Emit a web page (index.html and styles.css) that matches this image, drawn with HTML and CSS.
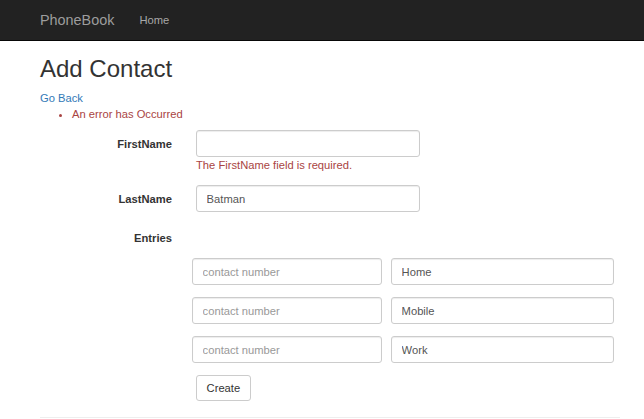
FILE: index.html
```html
<!DOCTYPE html>
<html>
<head>
<meta charset="utf-8">
<title>Add Contact</title>
<link rel="stylesheet" href="styles.css">
</head>
<body>
<nav class="navbar">
  <a class="brand" href="#">PhoneBook</a>
  <a class="nav-link" href="#">Home</a>
</nav>
<main class="container">
  <h2 class="title">Add Contact</h2>
  <a class="back" href="#">Go Back</a>
  <ul class="summary">
    <li>An error has Occurred</li>
  </ul>
  <form class="form">
    <div class="group">
      <label class="label">FirstName</label>
      <div class="field">
        <input class="input name" type="text" value="">
        <div class="error">The FirstName field is required.</div>
      </div>
    </div>
    <div class="group">
      <label class="label">LastName</label>
      <div class="field">
        <input class="input name" type="text" value="Batman">
      </div>
    </div>
    <div class="group">
      <label class="label">Entries</label>
    </div>
    <div class="entries">
      <div class="entry">
        <input class="input number" type="text" placeholder="contact number">
        <input class="input kind" type="text" value="Home">
      </div>
      <div class="entry">
        <input class="input number" type="text" placeholder="contact number">
        <input class="input kind" type="text" value="Mobile">
      </div>
      <div class="entry">
        <input class="input number" type="text" placeholder="contact number">
        <input class="input kind" type="text" value="Work">
      </div>
    </div>
    <div class="actions">
      <button class="btn" type="button">Create</button>
    </div>
  </form>
  <hr class="rule">
</main>
</body>
</html>
```
FILE: styles.css
```css
* { box-sizing: border-box; }
html, body {
  margin: 0;
  padding: 0;
  background: #fff;
}
body {
  font-family: "Liberation Sans", Arial, sans-serif;
  font-size: 11.2px;
  line-height: 16px;
  color: #333;
}
a { text-decoration: none; }

.navbar {
  height: 41px;
  background: #222;
  border-bottom: 1px solid #080808;
  display: flex;
  align-items: center;
  padding-left: 40px;
}
.brand {
  color: #9d9d9d;
  font-size: 14.4px;
  line-height: 20px;
  margin-right: 25px;
}
.nav-link {
  color: #a8a8a8;
  font-size: 11.2px;
  line-height: 16px;
}

.container {
  padding: 0 24px 0 40px;
}
.title {
  font-size: 24px;
  font-weight: normal;
  line-height: 26.4px;
  margin: 15px 0 8px;
  color: #333;
}
.back {
  display: block;
  color: #337ab7;
}
.summary {
  margin: 0 0 8px;
  padding-left: 32px;
  color: #a94442;
}

.group {
  display: flex;
  margin-bottom: 12px;
}
.label {
  width: 132px;
  text-align: right;
  font-weight: bold;
  padding-top: 6px;
  margin-right: 24px;
}
.field {
  width: 224px;
}
.input {
  display: block;
  height: 27px;
  border: 1px solid #ccc;
  border-radius: 3px;
  padding: 0 9.6px;
  font-family: "Liberation Sans", Arial, sans-serif;
  font-size: 11.2px;
  color: #555;
  background: #fff;
  box-shadow: inset 0 1px 1px rgba(0,0,0,0.075);
  outline: none;
}
.input::placeholder { color: #999; }
.name { width: 224px; }
.error {
  color: #a94442;
}

.entries {
  display: flex;
  flex-direction: column;
  gap: 12px;
  padding-left: 152px;
  margin-top: 12px;
}
.entry {
  display: flex;
  gap: 9px;
}
.number { width: 190px; }
.kind { width: 223px; }

.actions {
  padding-left: 156px;
  margin-top: 12px;
}
.btn {
  height: 26px;
  padding: 0 9.6px;
  border: 1px solid #ccc;
  border-radius: 3px;
  background: #fff;
  color: #333;
  font-family: "Liberation Sans", Arial, sans-serif;
  font-size: 11.2px;
}

.rule {
  border: 0;
  border-top: 1px solid #eee;
  margin: 16px 0 0;
}
```
